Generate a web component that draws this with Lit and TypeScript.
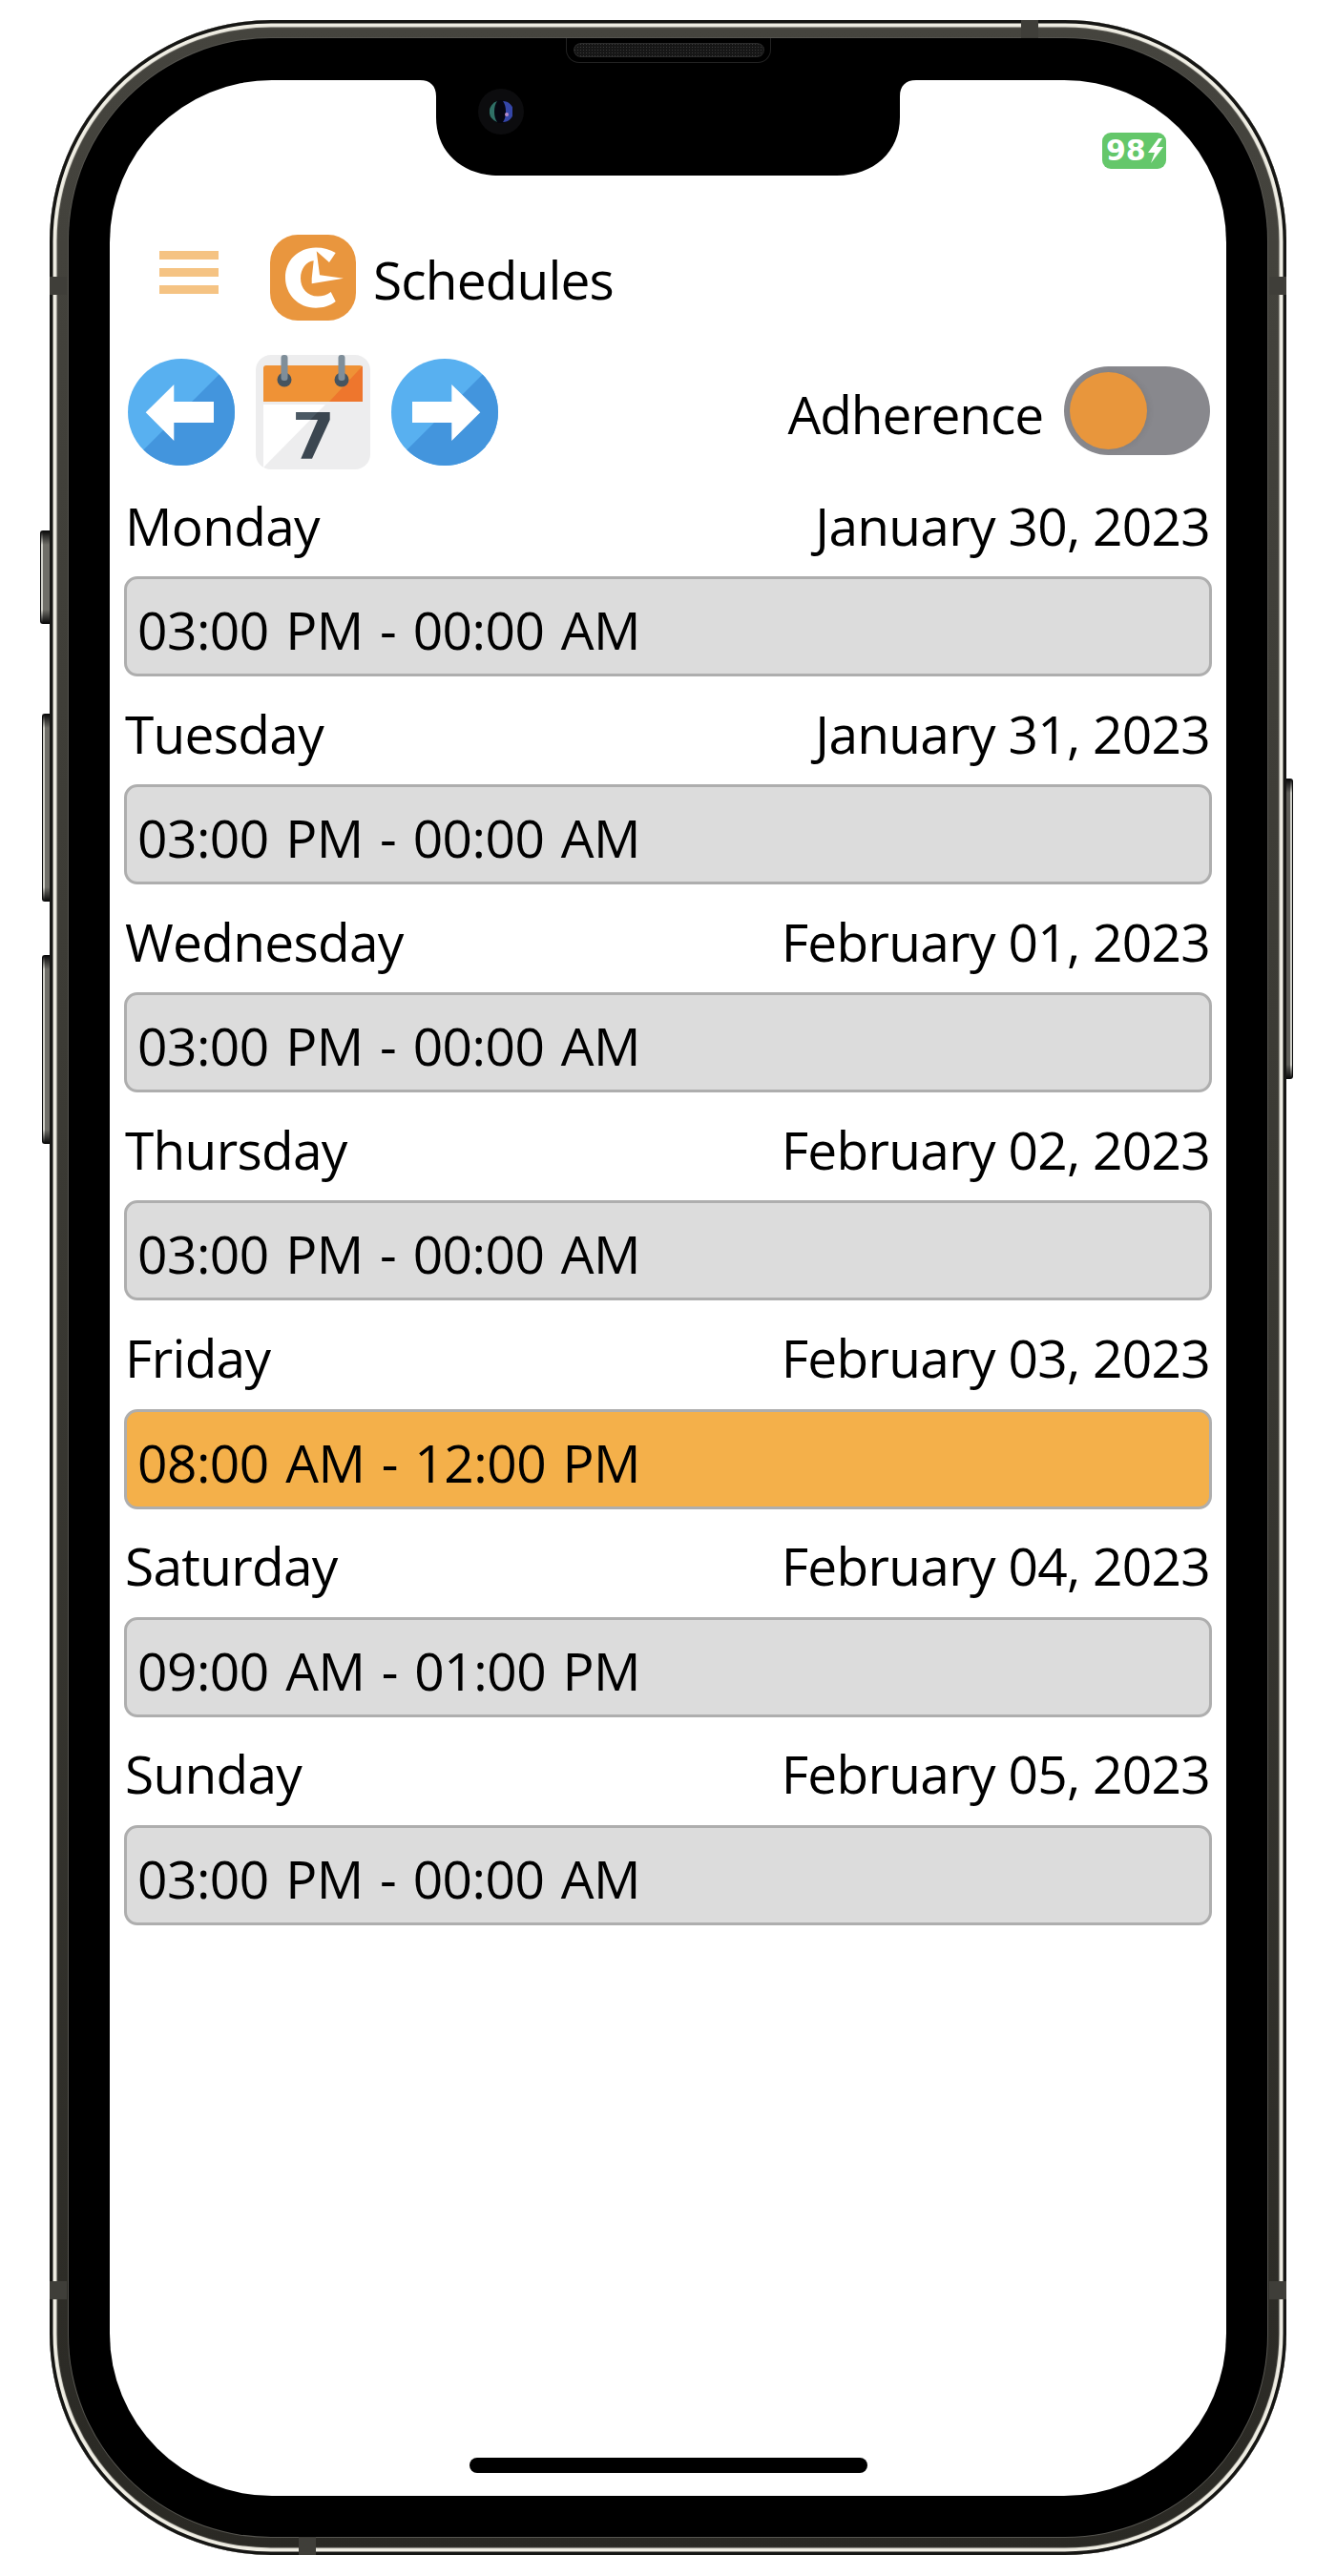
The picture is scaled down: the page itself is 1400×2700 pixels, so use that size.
import { LitElement, html, css, svg } from "lit";
import { customElement } from "lit/decorators.js";
import { classMap } from "lit/directives/class-map.js";

const ROWS = [
  { day: "Monday", date: "January 30, 2023", time: "03:00 PM - 00:00 AM", on: false },
  { day: "Tuesday", date: "January 31, 2023", time: "03:00 PM - 00:00 AM", on: false },
  { day: "Wednesday", date: "February 01, 2023", time: "03:00 PM - 00:00 AM", on: false },
  { day: "Thursday", date: "February 02, 2023", time: "03:00 PM - 00:00 AM", on: false },
  { day: "Friday", date: "February 03, 2023", time: "08:00 AM - 12:00 PM", on: true },
  { day: "Saturday", date: "February 04, 2023", time: "09:00 AM - 01:00 PM", on: false },
  { day: "Sunday", date: "February 05, 2023", time: "03:00 PM - 00:00 AM", on: false },
];

const ANTENNAS = ["a-top", "a-l1", "a-r1", "a-l2", "a-r2", "a-bot"];
const BUTTONS = ["b-mute", "b-up", "b-down", "b-power"];

const arrow = (points: string) => svg`
  <circle cx="56" cy="56" r="56" fill="#58b0f0"/>
  <path d="M95.6 16.4A56 56 0 0 1 16.4 95.6Z" fill="#4395dd"/>
  <polygon points=${points} fill="#fff"/>
  <polygon points=${points} fill="#ebecee" clip-path="path('M112 0L0 112L112 112Z')"/>
`;

@customElement("app-root")
export class AppRoot extends LitElement {
  static styles = css`
    :host {
      display: block;
      width: 1400px;
      height: 2700px;
      background: #fff;
      font-family: "Open Sans", "Noto Sans", sans-serif;
      color: #000;
      overflow: hidden;
    }
    .stage { padding: 21px 52px; position: relative; }
    .phone {
      position: relative;
      height: 2657px;
      box-sizing: border-box;
      border-radius: 232px;
      padding: 19px 20px;
      background: linear-gradient(#45443e, #3c3b35 40%, #2a2924);
      box-shadow: inset 0 0 0 3.5px #161614, inset 0 0 1px 7.5px #efede3;
    }
    .antenna { position: absolute; background: #3f3e39; }
    .a-top { left: 1018px; top: 0; width: 18px; height: 19px; }
    .a-l1 { left: 0; top: 269px; width: 18px; height: 19px; }
    .a-r1 { right: 0; top: 269px; width: 18px; height: 19px; }
    .a-l2 { left: 0; top: 2370px; width: 18px; height: 19px; }
    .a-r2 { right: 0; top: 2370px; width: 18px; height: 19px; }
    .a-bot { left: 261px; bottom: 0; width: 18px; height: 19px; }
    .side {
      position: absolute;
      box-sizing: border-box;
      background:
        linear-gradient(180deg, #0c0c0c, transparent 14px, transparent calc(100% - 14px), #0c0c0c),
        linear-gradient(90deg, #cfcfc8 0 2px, #6f6e68 2px 100%);
      border: 1.5px solid #0c0c0c;
      border-radius: 3px 0 0 3px;
      border-right: 0;
    }
    .b-mute { left: -10px; top: 535px; width: 10px; height: 98px; }
    .b-up { left: -8px; top: 727px; width: 8px; height: 197px; }
    .b-down { left: -8px; top: 980px; width: 8px; height: 198px; }
    .b-power {
      right: -7px; top: 795px; width: 7px; height: 315px;
      border-radius: 0 3px 3px 0;
      border: 1.5px solid #0c0c0c;
      border-left: 0;
      background:
        linear-gradient(180deg, #0c0c0c, transparent 14px, transparent calc(100% - 14px), #0c0c0c),
        linear-gradient(90deg, #5f5e59 0 4px, #cfcfc8 4px 100%);
    }
    .bezel {
      height: 100%;
      box-sizing: border-box;
      background: #000;
      border-radius: 212px;
      padding: 44px 43px 43px 43px;
      box-shadow: 0 0 0 1px #55544f;
    }
    .screen {
      position: relative;
      height: 100%;
      box-sizing: border-box;
      background: #fff;
      border-radius: 170px;
      padding: 55px 15px 0 15px;
      display: flex;
      flex-direction: column;
    }
    .notch { position: absolute; left: 325px; top: 0; display: block; }
    .speaker-pocket {
      position: absolute; left: 478px; top: -44px; width: 215px; height: 26px;
      box-sizing: border-box;
      border: 1px solid #222;
      border-top: 0;
      border-radius: 0 0 14px 14px;
      display: flex; justify-content: center; padding-top: 5px;
    }
    .speaker {
      width: 200px; height: 15px; border-radius: 8px;
      background-color: #161616;
      background-image: radial-gradient(#3a3a3a 0.8px, transparent 1px);
      background-size: 3px 3px;
      box-shadow: inset 0 0 0 1px #2b2b2b;
    }
    .camera {
      position: absolute; left: 386px; top: 9px; width: 48px; height: 48px;
      border-radius: 50%;
      background: #0c0c0e;
      display: flex; align-items: center; justify-content: center;
    }
    .status { display: flex; justify-content: flex-end; height: 38px; padding-right: 48px; }
    .battery {
      width: 67px; height: 38px;
      background: #64c76a;
      border-radius: 9px;
      display: flex; align-items: center;
      padding-left: 4px;
      box-sizing: border-box;
      color: #fff;
      font: 700 30px/38px "DejaVu Sans", sans-serif;
    }
    .battery svg { margin-left: 2px; flex: none; }
    .header { display: flex; align-items: center; margin-top: 69px; height: 90px; }
    .burger {
      margin-left: 37px; width: 62px; height: 45px; margin-top: -11px;
      display: flex; flex-direction: column; justify-content: space-between;
    }
    .burger i { display: block; height: 9px; background: #f5c383; }
    .logo { margin-left: 54px; width: 90px; height: 90px; display: block; }
    .title { margin-left: 18px; font-size: 55px; line-height: 90px; margin-top: 3px; letter-spacing: -0.85px; }
    .toolbar { display: flex; align-items: center; margin-top: 36px; height: 120px; }
    .toolbar .nav { display: block; width: 112px; height: 112px; flex: none; }
    .toolbar .nav.first { margin-left: 4px; }
    .toolbar .cal { display: block; width: 120px; height: 120px; flex: none; margin: 0 22px; }
    .adh { margin-left: auto; display: flex; align-items: center; margin-top: -3px; }
    .adh-label { font-size: 55px; line-height: 70px; margin-top: 6px; letter-spacing: -1.1px; }
    .toggle {
      position: relative;
      width: 153px; height: 93px; margin-left: 22px; margin-right: 2px;
      border-radius: 47px; background: #88888d;
    }
    .knob {
      position: absolute; left: 6px; top: 6px; width: 81px; height: 81px;
      border-radius: 50%; background: #e8963c;
      box-shadow: 2px 0 6px rgba(0,0,0,.08);
    }
    .rows { display: flex; flex-direction: column; gap: 27.65px; margin-top: 27px; }
    .label { display: flex; justify-content: space-between; height: 64.4px; font-size: 55px; line-height: 64px; letter-spacing: -0.7px; padding: 0 2px 0 1px; }
    .box {
      height: 105px;
      box-sizing: border-box;
      border: 3px solid #aeaeae;
      border-radius: 14px;
      background: #dcdcdc;
      padding-left: 11px;
      font-size: 55px;
      line-height: 105px;
      letter-spacing: -0.5px;
      word-spacing: 3.6px;
      margin-top: 21px;
    }
    .box.on { background: #f4b04a; }
    .home {
      position: absolute; left: 377px; bottom: 24px; width: 417px; height: 16px;
      border-radius: 8px; background: #000;
    }
  `;

  render() {
    return html`
      <div class="stage">
        <div class="phone">
          ${ANTENNAS.map((c) => html`<div class=${"antenna " + c}></div>`)}
          ${BUTTONS.map((c) => html`<div class=${"side " + c}></div>`)}
          <div class="bezel">
            <div class="screen">
              <svg class="notch" width="520" height="100" viewBox="0 0 520 100">
                <path d="M0 0H520C509 0 503 6 503 17V39C503 75 476 100 437 100H83C44 100 17 75 17 39V17C17 6 11 0 0 0Z" fill="#000"/>
              </svg>
              <div class="speaker-pocket"><div class="speaker"></div></div>
              <div class="camera">
                <svg width="24" height="24" viewBox="0 0 24 24">
                  <circle cx="12" cy="12" r="12" fill="#050510"/>
                  <path d="M14 1A11 11 0 0 1 14 23C18 18 18 6 14 1Z" fill="#3546a8"/>
                  <path d="M8 1A11.5 11.5 0 0 0 8 23C4 18 4 6 8 1Z" fill="#2f6f66"/>
                  <circle cx="18" cy="15" r="2" fill="#b58ac9"/>
                </svg>
              </div>
              <div class="status">
                <div class="battery">98<svg width="17" height="26" viewBox="0 0 17 26"><path d="M11 0L0 15H7L3 26L16 9H9L15 0Z" fill="#fff"/></svg></div>
              </div>
              <div class="header">
                <div class="burger"><i></i><i></i><i></i></div>
                <svg class="logo" viewBox="0 0 90 90">
                  <rect width="90" height="90" rx="29" fill="#e9963e"/>
                  <path d="M68.7 70C62 75 55 76.7 48 76.7C29 76.7 16 62 16 45C16 27 29 14 48 13.5C56 13.5 63 15.5 68.7 19L62 29L48.7 17.3L52 42.3L77 45.7L43.7 51.3L43.7 45.7L45.7 27.3C38 28 32 36 32 45.7C32 56 39 64.5 50 64.5C55 64.5 60 63 63.7 60Z" fill="#fff"/>
                </svg>
                <div class="title">Schedules</div>
              </div>
              <div class="toolbar">
                <svg class="nav first" viewBox="0 0 112 112">${arrow("18.7,56.3 48.3,27 48.3,45 90,45 90,67 48.3,67 48.3,86")}</svg>
                <svg class="cal" viewBox="0 0 120 120">
                  <rect width="120" height="120" rx="16" fill="#ededee"/>
                  <path d="M8 49V14A3 3 0 0 1 11 11H109A3 3 0 0 1 112 14V49Z" fill="#ef9236"/>
                  <path d="M112 11.5V49H77Z" fill="#ee762d"/>
                  <polygon points="8,52 73,52 8,118" fill="#fff"/>
                  <circle cx="30" cy="26" r="7.5" fill="#46545f"/>
                  <circle cx="90" cy="26" r="7.5" fill="#46545f"/>
                  <rect x="26.5" y="0" width="7" height="27" rx="3" fill="#7f8e99"/>
                  <rect x="86.5" y="0" width="7" height="27" rx="3" fill="#7f8e99"/>
                  <polygon points="42.3,60 77.7,60 77.7,68 59,108.7 47.3,108.7 65,68 42.3,68" fill="#3b4650"/>
                  <polygon points="42.3,60 65,60 57,68 42.3,68" fill="#4b5964"/>
                </svg>
                <svg class="nav" viewBox="0 0 112 112">${arrow("93.3,56.3 63.3,27 63.3,45 22,45 22,67 63.3,67 63.3,86")}</svg>
                <div class="adh">
                  <div class="adh-label">Adherence</div>
                  <div class="toggle"><div class="knob"></div></div>
                </div>
              </div>
              <div class="rows">
                ${ROWS.map(
                  (r) => html`
                    <div class="row">
                      <div class="label"><span>${r.day}</span><span>${r.date}</span></div>
                      <div class=${classMap({ box: true, on: r.on })}>${r.time}</div>
                    </div>
                  `
                )}
              </div>
              <div class="home"></div>
            </div>
          </div>
        </div>
      </div>
    `;
  }
}
